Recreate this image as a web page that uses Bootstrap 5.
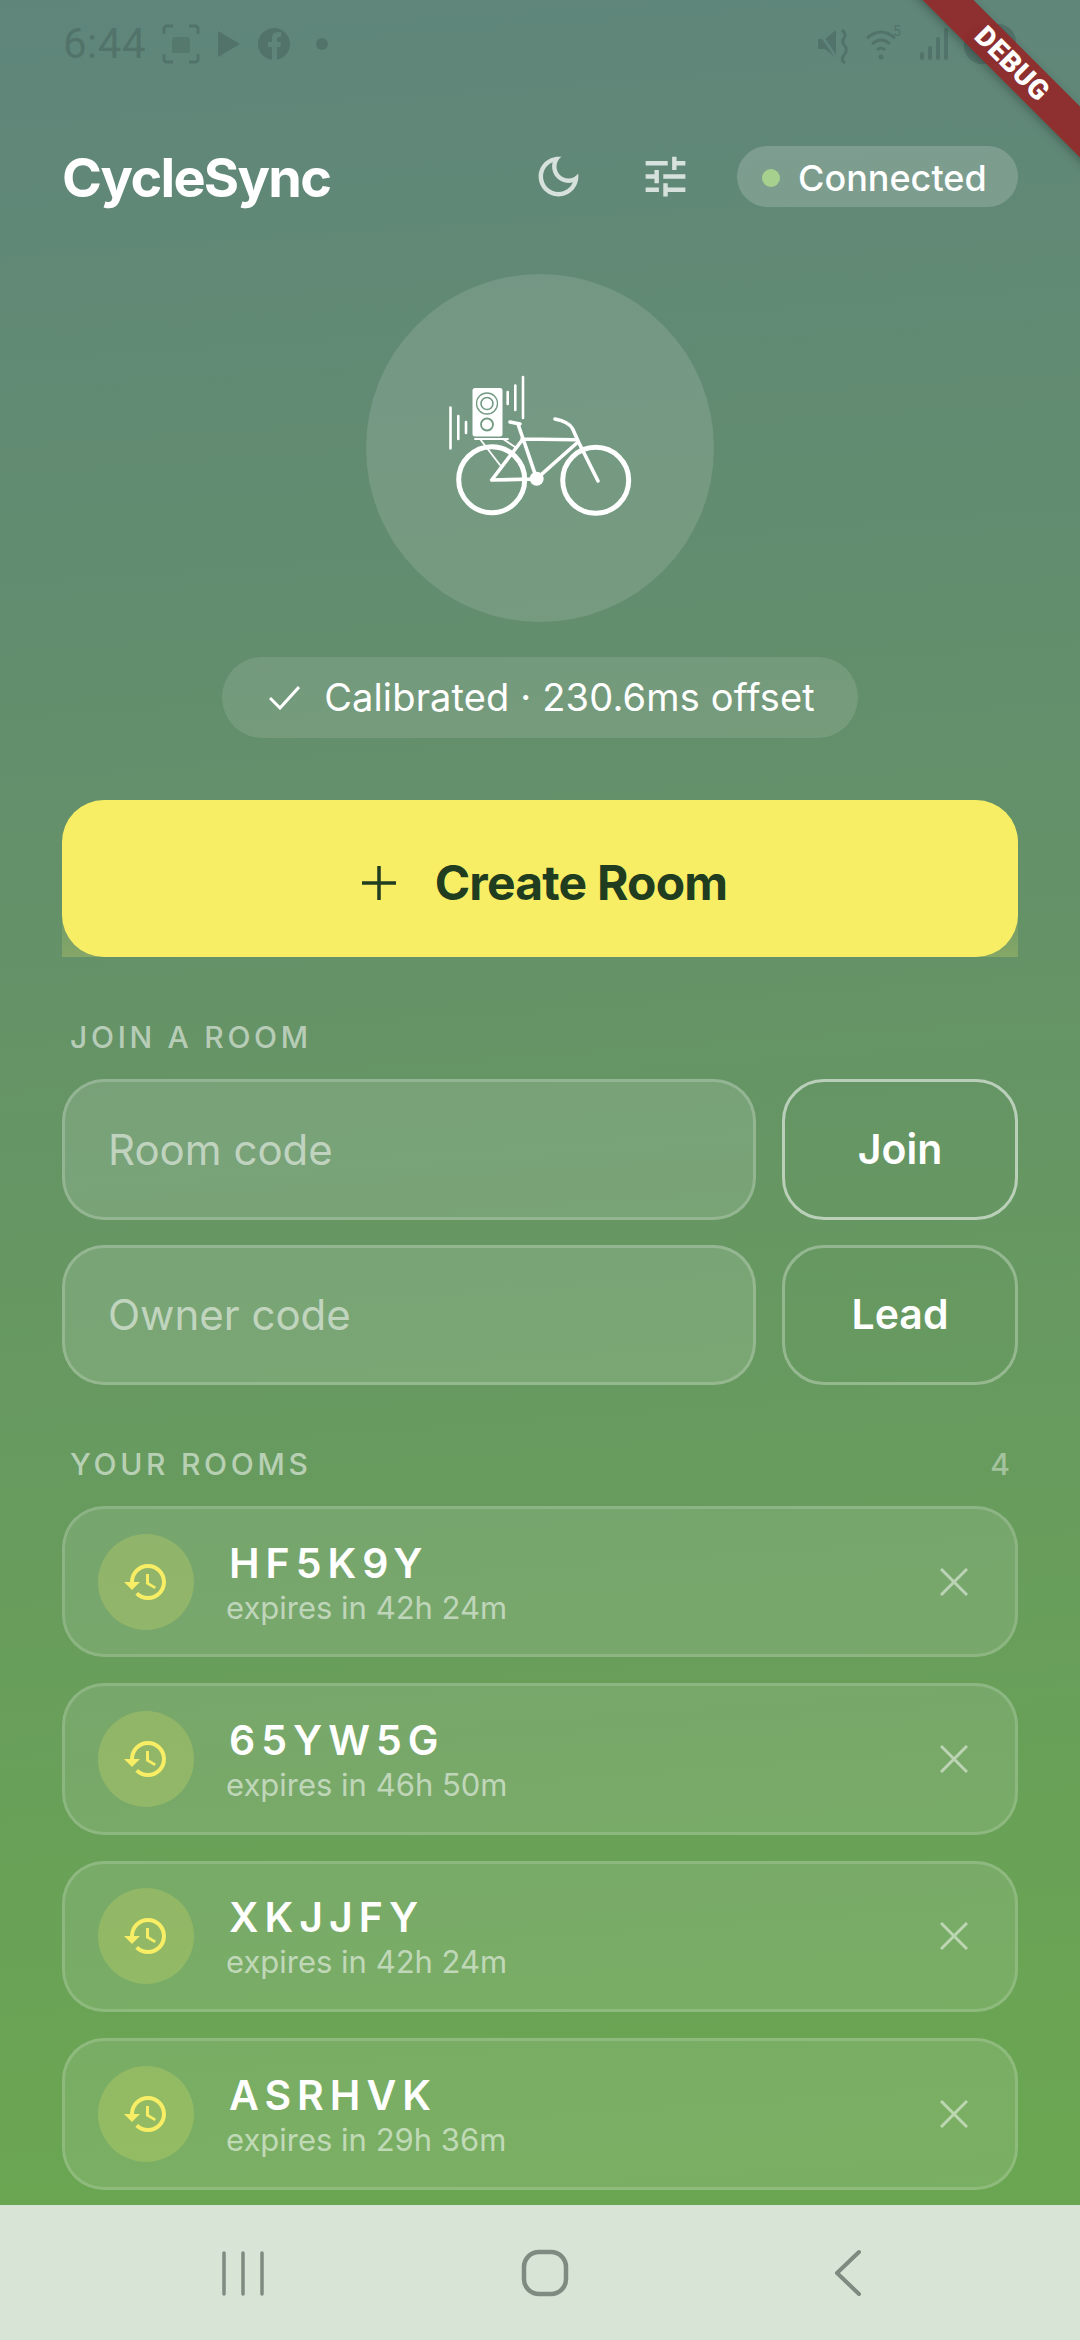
<!DOCTYPE html>
<html lang="en">
<head>
  <meta charset="UTF-8" />
  <meta name="viewport" content="width=device-width, initial-scale=1">
  <title>CycleSync</title>
  <link href="https://cdn.jsdelivr.net/npm/bootstrap@5.3.2/dist/css/bootstrap.min.css" rel="stylesheet">
  <style>
    html, body { width: 1080px; height: 2340px; overflow: hidden; }
    body {
      font-family: Inter, "Noto Sans", sans-serif; color: #fff;
      background: linear-gradient(176deg, #5f857b 0%, #64906a 35%, #6aa454 85%, #6ba850 100%);
    }
    .phone { height: 2340px; }
    .sbar { height: 146px; padding: 20px 64px 0 63px; color: #52736a; }
    .sbar-time { font-family: Roboto, sans-serif; font-size: 42px; line-height: 48px; width: 82px; letter-spacing: .5px; }
    .pagepad { padding: 0 62px; }
    .topbar { height: 61px; }
    .brand { font-size: 54px; font-weight: 700; letter-spacing: -1.7px; line-height: 61px; padding-top: 2px; }
    .ico-moon { margin-right: 54px; }
    .ico-tune { margin-right: 45px; }
    .conn-pill { width: 281px; height: 61px; background: rgba(255,255,255,.18); font-size: 36px; font-weight: 500; padding: 2px 0 0 25px; gap: 18px; }
    .conn-dot { width: 18px; height: 18px; border-radius: 50%; background: #a6d08e; }
    .bike-circle { width: 348px; height: 348px; margin: 67px auto 0; background: rgba(255,255,255,.12); }
    .calib-pill { width: 636px; height: 81px; margin: 35px auto 0; padding-left: 4px; background: rgba(255,255,255,.11); font-size: 38px; letter-spacing: .15px; gap: 24px; }
    .create-wrap { height: 157px; margin-top: 62px; background: linear-gradient(rgba(248,238,102,0) 55%, rgba(248,238,102,.22)); }
    .create-btn { height: 157px; background: #f8ee66; color: #213d20; border: 0; border-radius: 42px; font-size: 48px; font-weight: 700; letter-spacing: -.8px; gap: 38px; padding: 8px 0 0 8px; }
    .create-btn:hover, .create-btn:active { background: #f8ee66 !important; color: #213d20 !important; }
    .sect-label { font-size: 30px; line-height: 36px; letter-spacing: 3.7px; font-weight: 500; color: rgba(255,255,255,.55); padding: 0 8px; margin-bottom: 24px; }
    .sect-join { margin-top: 62px; }
    .sect-rooms { margin-top: 61px; }
    .sect-count { letter-spacing: 0; }
    .join-row { height: 140.5px; gap: 26px; }
    .join-row + .join-row { margin-top: 25px; }
    .code-input {
      height: 140.5px; flex: 1 1 auto; border: 3px solid rgba(255,255,255,.2); border-radius: 42px;
      background: rgba(255,255,255,.13); padding: 0 43px; font-size: 42px; color: #fff;
    }
    .code-input::placeholder { color: rgba(255,255,255,.55); }
    .side-btn {
      width: 236px; height: 140.5px; flex: 0 0 236px; background: transparent; color: #fff; font-size: 41px; font-weight: 600;
      border: 3px solid rgba(255,255,255,.3); border-radius: 42px;
    }
    .side-btn-on { border-color: rgba(255,255,255,.55); }
    .room-item {
      height: 151.4px; background: rgba(255,255,255,.1); border: 3px solid rgba(255,255,255,.16);
      border-radius: 42px; padding: 0 47px 0 33px; margin-bottom: 26px;
    }
    .room-ico { width: 96px; height: 96px; background: rgba(248,238,102,.2); margin-right: 32px; }
    .room-text { padding-top: 3px; }
    .room-code { font-size: 41px; line-height: 46px; font-weight: 600; letter-spacing: 6px; padding-left: 3px; }
    .room-exp { font-size: 31px; line-height: 38px; margin-top: 3px; color: rgba(255,255,255,.55); }
    .navbar-sys { position: absolute; left: 0; right: 0; bottom: 0; height: 135px; background: #d8e4d5; }
    .nav-recents { margin-left: 221px; }
    .nav-home { margin-left: 256px; }
    .nav-back { margin-left: 264px; }
    .debug-band {
      position: absolute; left: 862px; top: 46px; width: 300px; height: 36px; transform: rotate(45deg);
      background: rgba(146,39,39,.9); box-shadow: 0 3px 9px rgba(0,0,0,.25);
      font-family: Roboto, sans-serif; font-weight: 900; font-size: 28px; line-height: 36px; text-align: center; letter-spacing: .5px;
    }
  </style>
</head>
<body>
<div class="phone position-relative">

  <div class="sbar d-flex align-items-start">
    <span class="sbar-time">6:44</span>
    <svg class="ms-3" width="40" height="48" viewBox="0 0 40 48" fill="none" stroke="currentColor" stroke-width="3"><path d="M3 14V9q0-3 3-3h6M28 6h6q3 0 3 3v5M37 34v5q0 3-3 3h-6M12 42H6q-3 0-3-3v-5"/><path d="M11 33V20q0-3 3-3h12q3 0 3 3v13z" stroke="none" fill="currentColor" opacity=".7"/></svg>
    <svg class="ms-3" width="24" height="48" viewBox="0 0 24 48" fill="currentColor"><path d="M1 11l22 13L1 37z"/></svg>
    <svg class="ms-3" width="34" height="48" viewBox="0 0 34 48"><circle cx="17" cy="24" r="16" fill="currentColor"/><path d="M15 40V27h-4v-5h4v-4q0-6 6-6h3v5h-2q-2 0-2 2v3h4l-1 5h-3v13z" fill="#5f857b"/></svg>
    <svg class="ms-4" width="14" height="48" viewBox="0 0 14 48" fill="currentColor"><circle cx="7" cy="24" r="6"/></svg>
    <div class="ms-auto d-flex align-items-start gap-3">
      <svg width="34" height="48" viewBox="0 0 34 48" fill="currentColor"><path d="M2 19h7l11-9v28l-11-9H2z"/><path d="M2 10l20 30" stroke="#5f857b" stroke-width="3"/><path d="M26 10q5 4 2 8t1 8q3 4-1 9t1 8" fill="none" stroke="currentColor" stroke-width="3"/></svg>
      <svg width="38" height="48" viewBox="0 0 38 48" fill="none" stroke="currentColor" stroke-width="3"><path d="M1 18q14-12 28 0M6 24q9-8 18 0M11 30q4-4 8 0"/><circle cx="15" cy="37" r="2.500" fill="currentColor" stroke="none"/><text x="27" y="16" font-size="14" fill="currentColor" stroke="none" font-family="Roboto">5</text></svg>
      <svg width="28" height="48" viewBox="0 0 28 48" fill="currentColor"><rect x="0" y="32" width="4" height="8" rx="2"/><rect x="8" y="26" width="4" height="14" rx="2"/><rect x="16" y="17" width="4" height="23" rx="2"/><rect x="24" y="8" width="4" height="32" rx="2"/></svg>
      <svg width="52" height="48" viewBox="0 0 52 48" fill="currentColor"><rect x="0" y="4" width="52" height="40" rx="18"/></svg>
    </div>
  </div>

  <div class="pagepad">
    <div class="topbar d-flex align-items-center">
      <span class="brand me-auto">CycleSync</span>
      <svg class="ico-moon opacity-75" width="53" height="53" viewBox="0 0 24 24" fill="#fff"><path d="M9.370 5.510C9.190 6.150 9.100 6.820 9.100 7.500c0 4.080 3.320 7.400 7.400 7.400.680 0 1.350-.090 1.990-.270C17.450 17.190 14.930 19 12 19c-3.860 0-7-3.140-7-7 0-2.930 1.810-5.450 4.370-6.490zM12 3c-4.970 0-9 4.030-9 9s4.030 9 9 9 9-4.030 9-9c0-.460-.040-.920-.100-1.360-.980 1.370-2.580 2.260-4.400 2.260-2.980 0-5.400-2.420-5.400-5.400 0-1.810.890-3.420 2.260-4.400C12.920 3.040 12.460 3 12 3z"/></svg>
      <svg class="ico-tune opacity-75" width="53" height="53" viewBox="0 0 24 24" fill="#fff"><path d="M3 17v2h6v-2H3zM3 5v2h10V5H3zm10 16v-2h8v-2h-8v-2h-2v6h2zM7 9v2H3v2h4v2h2V9H7zm14 4v-2H11v2h10zm-6-4h2V7h4V5h-4V3h-2v6z"/></svg>
      <div class="conn-pill rounded-pill d-flex align-items-center">
        <span class="conn-dot"></span><span>Connected</span>
      </div>
    </div>

    <div class="bike-circle rounded-circle d-flex align-items-center justify-content-center">
      <svg width="200" height="160" viewBox="100 110 200 160" fill="none" stroke="#fff" stroke-linecap="round">
        <circle cx="151.700" cy="221.700" r="33" stroke-width="5"/>
        <circle cx="255.700" cy="222.300" r="33" stroke-width="5"/>
        <circle cx="196.700" cy="220.700" r="7" fill="#fff" stroke="none"/>
        <path stroke-width="3.600" d="M178 166l18.700 54.700M182 181l53 .7M238 184l-41.300 36.700M151.700 222l45-1M151.700 222l31.300-41M170 164l10 2"/>
        <path stroke-width="3.600" d="M215 161q14 3 17.500 9.500l6 13.500 19.500 39"/>
        <path stroke-width="1.800" d="M135 181h33M140 181l20 26M163 181l12 8"/>
        <rect x="132.500" y="130" width="30" height="48.500" rx="2.500" fill="#fff" stroke="none"/>
        <circle cx="147" cy="145.500" r="10.500" stroke="#739a82" stroke-width="1.300"/>
        <circle cx="147" cy="145.500" r="6" stroke="#739a82" stroke-width="1.600"/>
        <circle cx="147" cy="166.500" r="6" stroke="#739a82" stroke-width="1.800"/>
        <path stroke-width="2.600" d="M110.500 149.500v41M118.300 158v23M126 164v11M167.700 134v12M175.300 127.500v24.500M183 119v41"/>
      </svg>
    </div>

    <div class="calib-pill rounded-pill d-flex align-items-center justify-content-center">
      <svg width="31" height="24" viewBox="0 0 31 24" fill="none" stroke="#fff" stroke-width="3"><path d="M1 12l10 10L30 1"/></svg>
      <span>Calibrated · 230.6ms offset</span>
    </div>

    <div class="create-wrap">
      <button type="button" class="btn create-btn w-100 d-flex align-items-center justify-content-center">
        <svg width="36" height="36" viewBox="0 0 36 36" stroke="#213d20" stroke-width="3.500"><path d="M18 1v34M1 18h34"/></svg>
        <span>Create Room</span>
      </button>
    </div>

    <div class="sect-label sect-join">JOIN A ROOM</div>
    <div class="join-row d-flex">
      <input class="code-input form-control shadow-none" type="text" placeholder="Room code">
      <button type="button" class="btn side-btn side-btn-on">Join</button>
    </div>
    <div class="join-row d-flex">
      <input class="code-input form-control shadow-none" type="text" placeholder="Owner code">
      <button type="button" class="btn side-btn">Lead</button>
    </div>

    <div class="sect-label sect-rooms d-flex justify-content-between">
      <span>YOUR ROOMS</span><span class="sect-count opacity-75">4</span>
    </div>

    <div id="rooms"></div>
  </div>

  <div class="navbar-sys d-flex align-items-center">
    <svg class="nav-recents flex-shrink-0" width="44" height="48" viewBox="0 0 44 48" stroke="#7f8a80" stroke-width="3.500" stroke-linecap="round"><path d="M3 4v41M22 4v41M41 4v41"/></svg>
    <svg class="nav-home flex-shrink-0" width="48" height="48" viewBox="0 0 48 48" fill="none" stroke="#7f8a80" stroke-width="4.500"><rect x="3" y="3" width="42" height="42" rx="15"/></svg>
    <svg class="nav-back flex-shrink-0" width="30" height="48" viewBox="0 0 30 48" fill="none" stroke="#7f8a80" stroke-width="4" stroke-linecap="round" stroke-linejoin="round"><path d="M26 3L4 24l22 21"/></svg>
  </div>

  <div class="debug-band">DEBUG</div>
</div>

<script src="https://cdn.jsdelivr.net/npm/bootstrap@5.3.2/dist/js/bootstrap.bundle.min.js"></script>
<script>
  const rooms = [
    ["HF5K9Y", "expires in 42h 24m"],
    ["65YW5G", "expires in 46h 50m"],
    ["XKJJFY", "expires in 42h 24m"],
    ["ASRHVK", "expires in 29h 36m"]
  ];
  const historyIcon = '<svg width="48" height="48" viewBox="0 0 24 24" fill="#f8ee66"><path d="M13 3a9 9 0 0 0-9 9H1l3.890 3.890.070.140L9 12H6c0-3.870 3.130-7 7-7s7 3.130 7 7-3.130 7-7 7c-1.930 0-3.680-.790-4.940-2.060l-1.420 1.420A8.954 8.954 0 0 0 13 21a9 9 0 0 0 0-18zm-1 5v5l4.280 2.540.720-1.210-3.500-2.080V8H12z"/></svg>';
  const closeIcon = '<svg class="ms-auto opacity-50" width="28" height="28" viewBox="0 0 28 28" stroke="#fff" stroke-width="3"><path d="M1 1l26 26M27 1L1 27"/></svg>';
  document.getElementById("rooms").innerHTML = rooms.map(r => `
    <div class="room-item d-flex align-items-center">
      <div class="room-ico rounded-circle d-flex align-items-center justify-content-center flex-shrink-0">${historyIcon}</div>
      <div class="room-text">
        <div class="room-code">${r[0]}</div>
        <div class="room-exp">${r[1]}</div>
      </div>
      ${closeIcon}
    </div>`).join("");
</script>
</body>
</html>
